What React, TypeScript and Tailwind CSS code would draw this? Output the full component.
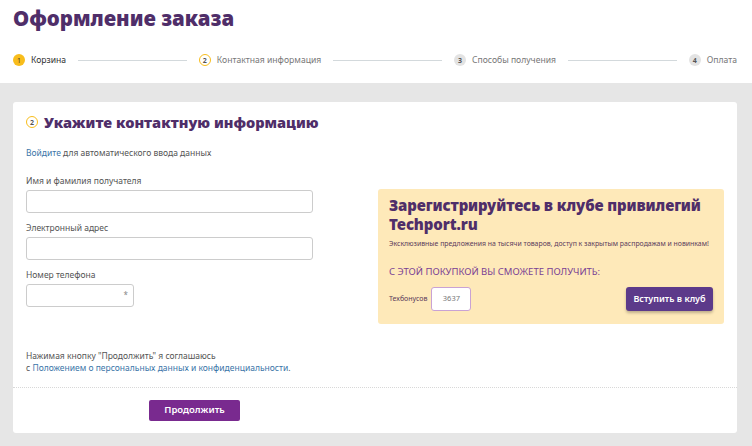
const purple = "text-[#4f2e69]";

function StepCircle({ n, state }: { n: number; state: "done" | "active" | "todo" }) {
  if (state === "done")
    return (
      <span className="flex h-[12px] w-[12px] shrink-0 items-center justify-center rounded-full bg-[#f8bd1c] text-[7px] leading-none text-[#4a3a2a]">
        {n}
      </span>
    );
  if (state === "active")
    return (
      <span className="flex h-[12px] w-[12px] shrink-0 items-center justify-center rounded-full border-[1.5px] border-[#f8bd1c] bg-white text-[7px] font-bold leading-none text-[#555]">
        {n}
      </span>
    );
  return (
    <span className="flex h-[12px] w-[12px] shrink-0 items-center justify-center rounded-full bg-[#e3e3e3] text-[7px] font-bold leading-none text-[#555]">
      {n}
    </span>
  );
}

function Step({ n, label, state }: { n: number; label: string; state: "done" | "active" | "todo" }) {
  return (
    <div className="flex items-center gap-[6px]">
      <StepCircle n={n} state={state} />
      <span className={`whitespace-nowrap text-[8.6px] leading-[12px] ${state === "done" ? "text-[#333]" : "text-[#777]"}`}>
        {label}
      </span>
    </div>
  );
}

function Line() {
  return <div className="mx-[12px] h-px flex-1 bg-[#d3d9dc]" />;
}

function Field({ label, wide = true, mb = true }: { label: string; wide?: boolean; mb?: boolean }) {
  return (
    <div className={mb ? "mb-[9px]" : ""}>
      <div className="mb-[3px] h-[12px] text-[8.5px] leading-[12px] text-[#555]">{label}</div>
      <div
        className={`relative h-[23px] rounded-[3px] border border-[#cccccc] bg-white ${wide ? "w-[287px]" : "w-[108px]"}`}
      >
        {!wide && <span className="absolute right-[5px] top-[6px] text-[8px] leading-none text-[#888]">*</span>}
      </div>
    </div>
  );
}

export default function App() {
  return (
    <div className="h-[446px] w-[752px] overflow-hidden bg-[#e6e6e6] font-['Noto_Sans',sans-serif]">
      {/* Header */}
      <div className="h-[83px] bg-white pl-[13px] pr-[15px] pt-[4px]">
        <h1 className={`text-[20.5px] font-black leading-[28px] ${purple}`}>Оформление заказа</h1>
        <div className="mt-[22px] flex items-center">
          <Step n={1} label="Корзина" state="done" />
          <Line />
          <Step n={2} label="Контактная информация" state="active" />
          <Line />
          <Step n={3} label="Способы получения" state="todo" />
          <Line />
          <Step n={4} label="Оплата" state="todo" />
        </div>
      </div>

      {/* Card */}
      <div className="ml-[13px] mt-[19px] h-[331px] w-[724px] rounded-[3px] bg-white">
        <div className="flex px-[13px] pt-[10px]">
          <div className="w-[287px]">
            <div className="flex h-[20px] items-center gap-[6px] whitespace-nowrap">
              <StepCircle n={2} state="active" />
              <h2 className={`text-[14.6px] font-black leading-[20px] ${purple}`}>Укажите контактную информацию</h2>
            </div>
            <p className="mt-[15px] h-[12px] text-[8.5px] leading-[12px] text-[#555]">
              <span className="text-[#3b75a8]">Войдите</span> для автоматического ввода данных
            </p>
            <div className="mt-[16px]">
              <Field label="Имя и фамилия получателя" />
              <Field label="Электронный адрес" />
              <Field label="Номер телефона" wide={false} mb={false} />
            </div>
          </div>

          {/* Club promo */}
          <div className="ml-auto mt-[77px] h-[135px] w-[346px] rounded-[3px] bg-[#fee9b9] px-[11px] pt-[7px]">
            <h3 className={`text-[15px] font-black leading-[19px] tracking-[-0.1px] ${purple}`}>
              Зарегистрируйтесь в клубе привилегий Techport.ru
            </h3>
            <p className="mt-[5px] whitespace-nowrap text-[6.9px] leading-[10px] text-[#5b3b5b]">
              Эксклюзивные предложения на тысячи товаров, доступ к закрытым распродажам и новинкам!
            </p>
            <p className="mt-[17px] text-[9.5px] leading-[12px] text-[#7a3f94]">С ЭТОЙ ПОКУПКОЙ ВЫ СМОЖЕТЕ ПОЛУЧИТЬ:</p>
            <div className="mt-[9px] flex items-center">
              <span className="text-[7px] text-[#5b3b5b]">Техбонусов</span>
              <div className="ml-[4px] flex h-[24px] w-[40px] items-center justify-center rounded-[3px] border border-[#c9a2d4] bg-white text-[7.5px] text-[#777]">
                3637
              </div>
              <button className="ml-auto flex h-[24px] w-[87px] items-center justify-center rounded-[3px] bg-[#5c3a8a] text-[9px] font-semibold text-white shadow-[0_2px_3px_rgba(0,0,0,0.25)]">
                Вступить в клуб
              </button>
            </div>
          </div>
        </div>

        {/* Agreement */}
        <div className="mt-[26px] px-[13px] text-[8.5px] leading-[12px] text-[#555]">
          <p>Нажимая кнопку "Продолжить" я соглашаюсь</p>
          <p>
            с <span className="text-[#3b75a8]">Положением о персональных данных и конфиденциальности</span>.
          </p>
        </div>
        <div className="mt-[13px] border-t border-dotted border-[#d8d8d8]" />
        <button className="ml-[136px] mt-[12px] flex h-[21px] w-[91px] items-center justify-center rounded-[2px] bg-[#792a8f] text-[9.5px] font-semibold text-white">
          Продолжить
        </button>
      </div>
    </div>
  );
}
